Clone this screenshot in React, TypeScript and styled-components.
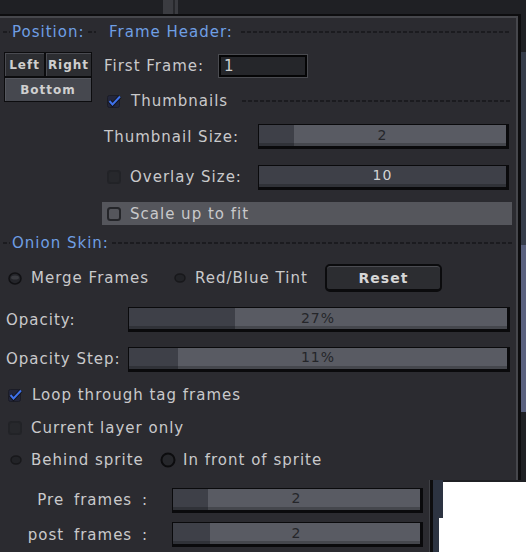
import styled, { createGlobalStyle } from "styled-components";

const GlobalStyle = createGlobalStyle`
  html, body {
    margin: 0;
    padding: 0;
    background: #1f2024;
  }
  body {
    width: 526px;
    height: 552px;
    overflow: hidden;
    font-family: "DejaVu Sans", "Liberation Sans", sans-serif;
  }
`;

const Screen = styled.div`
  width: 526px;
  height: 552px;
  display: flex;
  flex-direction: column;
  background: #1f2024;
  overflow: hidden;
`;

const TopBar = styled.div`
  height: 14px;
  flex: none;
  padding-left: 163px;
`;

const Handle = styled.div`
  width: 15px;
  height: 14px;
  background: linear-gradient(
    to right,
    #3b3c41 0 10px,
    #27282c 10px 12px,
    #3b3c41 12px
  );
`;

const Upper = styled.div`
  display: flex;
  height: 466px;
  flex: none;
`;

const Popup = styled.div`
  width: 521px;
  box-sizing: border-box;
  border-top: 2px solid #0d0d0f;
  border-right: 3px solid #0d0d0f;
  background: #2b2b30;
`;

const PopupInner = styled.div`
  height: 100%;
  box-sizing: border-box;
  border-top: 2px solid #46474c;
  border-right: 2px solid #46474c;
  padding-right: 4px;
  display: flex;
  flex-direction: column;
`;

const ScrollStrip = styled.div`
  width: 5px;
  display: flex;
  flex-direction: column;
`;

const ScrollPart = styled.div<{ $h: number; $c: string }>`
  height: ${(p) => p.$h}px;
  background: ${(p) => p.$c};
`;

const TopGrid = styled.div`
  display: grid;
  grid-template-columns: 102px 1fr;
`;

const Column = styled.div<{ $pl?: number; $pr?: number }>`
  display: flex;
  flex-direction: column;
  padding-left: ${(p) => p.$pl ?? 0}px;
  padding-right: ${(p) => p.$pr ?? 0}px;
`;

const Header = styled.div<{ $h: number; $pl: number }>`
  height: ${(p) => p.$h}px;
  padding-left: ${(p) => p.$pl}px;
  display: flex;
  align-items: center;
  gap: 2px;
`;

const HeaderText = styled.span`
  color: #6f9fe4;
  font-size: 15px;
  letter-spacing: 1px;
  white-space: nowrap;
`;

const Dash = styled.div<{ $w?: number; $ml?: number }>`
  height: 2px;
  ${(p) => (p.$w ? `width: ${p.$w}px; flex: none;` : "flex: 1;")}
  margin-left: ${(p) => p.$ml ?? 0}px;
  background-image: repeating-linear-gradient(
    to right,
    #1b1b1f 0 4px,
    transparent 4px 6px
  );
`;

const PosGrid = styled.div`
  margin: 6px 0 0 4px;
  width: 88px;
  display: grid;
  grid-template-columns: 41px 47px;
  grid-template-rows: 25px 25px;
`;

const PosButton = styled.div<{ $active?: boolean; $span?: boolean }>`
  box-sizing: border-box;
  display: flex;
  align-items: center;
  justify-content: center;
  grid-column: ${(p) => (p.$span ? "1 / span 2" : "auto")};
  border: 1px solid #0c0c0e;
  background: ${(p) => (p.$active ? "#46484f" : "#2c2d31")};
  box-shadow: inset 1px 1px 0 ${(p) => (p.$active ? "#55575e" : "#4a4b51")};
  color: #cfcfcf;
  font-size: 12px;
  font-weight: bold;
  letter-spacing: 1px;
`;

const Row = styled.div<{ $h: number; $pl?: number; $pr?: number }>`
  height: ${(p) => p.$h}px;
  flex: none;
  display: flex;
  align-items: center;
  padding-left: ${(p) => p.$pl ?? 0}px;
  padding-right: ${(p) => p.$pr ?? 0}px;
`;

const Label = styled.span<{ $w?: number; $right?: boolean; $wordGap?: number }>`
  color: #c9c9cb;
  font-size: 15px;
  letter-spacing: 1px;
  word-spacing: ${(p) => p.$wordGap ?? 0}px;
  white-space: nowrap;
  ${(p) => (p.$w ? `width: ${p.$w}px; flex: none;` : "")}
  text-align: ${(p) => (p.$right ? "right" : "left")};
`;

const LabelCell = styled.div<{ $w: number; $pl?: number }>`
  width: ${(p) => p.$w}px;
  flex: none;
  box-sizing: border-box;
  padding-left: ${(p) => p.$pl ?? 0}px;
  display: flex;
  align-items: center;
  gap: 9px;
`;

const Option = styled.div<{ $gap?: number }>`
  display: flex;
  align-items: center;
  gap: ${(p) => p.$gap ?? 9}px;
`;

const TextInput = styled.div`
  width: 90px;
  height: 24px;
  box-sizing: border-box;
  border: 1px solid #4a4b50;
  display: flex;
`;

const TextInputInner = styled.div`
  flex: 1;
  border: 2px solid #050506;
  background: #25262a;
  color: #d0d0d0;
  font-size: 15px;
  line-height: 18px;
  padding-left: 3px;
`;

const SliderBox = styled.div<{ $fill: number; $w?: number }>`
  ${(p) => (p.$w ? `width: ${p.$w}px; flex: none;` : "flex: 1;")}
  height: 25px;
  box-sizing: border-box;
  border: 1px solid #0a0a0c;
  border-right-width: 3px;
  border-bottom-width: 3px;
  background: linear-gradient(
    to right,
    #3e4048 0 ${(p) => p.$fill}%,
    #595b63 ${(p) => p.$fill}%
  );
  box-shadow: inset 0 -3px 0 rgba(0, 0, 0, 0.22);
  display: flex;
  align-items: center;
  justify-content: center;
  padding-bottom: 2px;
`;

const SliderValue = styled.span<{ $light?: boolean }>`
  color: ${(p) => (p.$light ? "#d4d4d4" : "#25262a")};
  font-size: 14px;
  letter-spacing: 1px;
`;

const Highlight = styled.div`
  margin: 5px 0 5px 102px;
  height: 23px;
  flex: none;
  background: #55565c;
  display: flex;
  align-items: center;
  padding-left: 5px;
  gap: 9px;
`;

const OptionGrid = styled.div`
  display: grid;
  grid-template-columns: 166px 151px 117px;
  align-items: center;
`;

const ResetButton = styled.div`
  height: 28px;
  box-sizing: border-box;
  border: 2px solid #0b0b0d;
  border-bottom-width: 3px;
  border-radius: 5px;
  background: #2c2d31;
  box-shadow: inset 0 1px 0 #4b4c52;
  display: flex;
  align-items: center;
  justify-content: center;
  color: #d6d6d6;
  font-size: 14px;
  font-weight: bold;
  letter-spacing: 1px;
`;

const Spacer = styled.div<{ $w: number }>`
  width: ${(p) => p.$w}px;
  flex: none;
`;

const Lower = styled.div`
  display: flex;
  height: 72px;
  flex: none;
`;

const LowerPanel = styled.div`
  width: 429px;
  flex: none;
  background: #2b2b30;
  display: flex;
  flex-direction: column;
`;

const Divider = styled.div`
  width: 4px;
  flex: none;
  box-sizing: border-box;
  border-left: 1px solid #3f4045;
  background: #0d0d0f;
`;

const SlateCol = styled.div`
  width: 10px;
  flex: none;
  display: flex;
  flex-direction: column;
  background: linear-gradient(#1f2024 0 2px, #ffffff 2px);
`;

const SlatePart = styled.div<{ $h?: number; $w: number }>`
  ${(p) => (p.$h ? `height: ${p.$h}px;` : "flex: 1;")}
  width: ${(p) => p.$w}px;
  background: #2c3341;
`;

const WhiteArea = styled.div`
  flex: 1;
  margin-top: 2px;
  background: #ffffff;
`;

type BoxKind = "checked" | "dark" | "outline";

function CheckBox({ kind }: { kind: BoxKind }) {
  if (kind === "checked") {
    return (
      <svg width="15" height="14" viewBox="0 0 15 14" style={{ flex: "none" }}>
        <rect x="0.5" y="1.5" width="12" height="12" rx="2" fill="#23263a" stroke="#1b1c26" />
        <path d="M2.5 7 L5.5 10.5 L13 2.5" stroke="#12141c" strokeWidth="4" fill="none" />
        <path d="M2.5 7 L5.5 10.5 L13 2.5" stroke="#3f71ea" strokeWidth="2" fill="none" />
      </svg>
    );
  }
  if (kind === "outline") {
    return (
      <svg width="14" height="14" viewBox="0 0 14 14" style={{ flex: "none" }}>
        <rect x="1" y="1" width="12" height="12" rx="2.5" fill="#55565c" stroke="#242529" strokeWidth="2" />
      </svg>
    );
  }
  return (
    <svg width="14" height="14" viewBox="0 0 14 14" style={{ flex: "none" }}>
      <rect x="1" y="1" width="12" height="12" rx="2.5" fill="#27282c" stroke="#222327" strokeWidth="2" />
    </svg>
  );
}

type RadioKind = "big" | "small" | "ring";

function Radio({ kind }: { kind: RadioKind }) {
  if (kind === "ring") {
    return (
      <svg width="16" height="16" viewBox="0 0 16 16" style={{ flex: "none" }}>
        <circle cx="8" cy="8" r="6.5" fill="#26272b" stroke="#0c0c0e" strokeWidth="2" />
      </svg>
    );
  }
  if (kind === "small") {
    return (
      <svg width="12" height="10" viewBox="0 0 12 10" style={{ flex: "none" }}>
        <ellipse cx="6" cy="5" rx="5" ry="4" fill="#222327" stroke="#18181b" strokeWidth="1.5" />
      </svg>
    );
  }
  return (
    <svg width="14" height="13" viewBox="0 0 14 13" style={{ flex: "none" }}>
      <ellipse cx="7" cy="6.5" rx="6" ry="5.5" fill="#24252a" stroke="#111114" strokeWidth="1.5" />
      <ellipse cx="7" cy="5.5" rx="4" ry="2" fill="#3a3b40" />
    </svg>
  );
}

function Slider({ fill, value, light, w }: { fill: number; value: string; light?: boolean; w?: number }) {
  return (
    <SliderBox $fill={fill} $w={w}>
      <SliderValue $light={light}>{value}</SliderValue>
    </SliderBox>
  );
}

export default function App() {
  return (
    <>
      <GlobalStyle />
      <Screen>
        <TopBar>
          <Handle />
        </TopBar>
        <Upper>
          <Popup>
            <PopupInner>
              <TopGrid>
                <Column $pr={6}>
                  <Header $h={28} $pl={3}>
                    <Dash $w={7} />
                    <HeaderText>Position:</HeaderText>
                    <Dash $ml={2} />
                  </Header>
                  <PosGrid>
                    <PosButton>Left</PosButton>
                    <PosButton>Right</PosButton>
                    <PosButton $active $span>
                      Bottom
                    </PosButton>
                  </PosGrid>
                </Column>
                <Column $pr={1}>
                  <Header $h={28} $pl={7}>
                    <HeaderText>Frame Header:</HeaderText>
                    <Dash $ml={6} />
                  </Header>
                  <Row $h={40} $pl={2}>
                    <Label $w={114}>First Frame:</Label>
                    <TextInput>
                      <TextInputInner>1</TextInputInner>
                    </TextInput>
                  </Row>
                  <Row $h={30} $pl={5}>
                    <Option>
                      <CheckBox kind="checked" />
                      <Label>Thumbnails</Label>
                    </Option>
                    <Dash $ml={14} />
                  </Row>
                  <Row $h={41} $pl={2} $pr={2}>
                    <LabelCell $w={154}>
                      <Label>Thumbnail Size:</Label>
                    </LabelCell>
                    <Slider fill={14} value="2" />
                  </Row>
                  <Row $h={40} $pl={2} $pr={2}>
                    <LabelCell $w={154} $pl={3}>
                      <CheckBox kind="dark" />
                      <Label>Overlay Size:</Label>
                    </LabelCell>
                    <Slider fill={100} value="10" light />
                  </Row>
                </Column>
              </TopGrid>
              <Highlight>
                <CheckBox kind="outline" />
                <Label>Scale up to fit</Label>
              </Highlight>
              <Header $h={26} $pl={3}>
                <Dash $w={7} />
                <HeaderText>Onion Skin:</HeaderText>
                <Dash $ml={1} />
              </Header>
              <Row $h={44} $pl={8}>
                <OptionGrid>
                  <Option>
                    <Radio kind="big" />
                    <Label>Merge Frames</Label>
                  </Option>
                  <Option $gap={9}>
                    <Radio kind="small" />
                    <Label>Red/Blue Tint</Label>
                  </Option>
                  <ResetButton>Reset</ResetButton>
                </OptionGrid>
              </Row>
              <Row $h={39} $pl={6} $pr={2}>
                <Label $w={122}>Opacity:</Label>
                <Slider fill={28} value="27%" />
              </Row>
              <Row $h={40} $pl={6} $pr={2}>
                <Label $w={122}>Opacity Step:</Label>
                <Slider fill={13} value="11%" />
              </Row>
              <Row $h={32} $pl={8}>
                <Option>
                  <CheckBox kind="checked" />
                  <Label>Loop through tag frames</Label>
                </Option>
              </Row>
              <Row $h={34} $pl={8}>
                <Option>
                  <CheckBox kind="dark" />
                  <Label>Current layer only</Label>
                </Option>
              </Row>
              <Row $h={30} $pl={10}>
                <LabelCell $w={150}>
                  <Radio kind="small" />
                  <Label>Behind sprite</Label>
                </LabelCell>
                <Option $gap={7}>
                  <Radio kind="ring" />
                  <Label>In front of sprite</Label>
                </Option>
              </Row>
            </PopupInner>
          </Popup>
          <ScrollStrip>
            <ScrollPart $h={38} $c="#1f2024" />
            <ScrollPart $h={193} $c="#363c4a" />
            <ScrollPart $h={167} $c="#59607e" />
          </ScrollStrip>
        </Upper>
        <Lower>
          <LowerPanel>
            <Row $h={40}>
              <Label $w={148} $right $wordGap={4}>
                Pre frames :
              </Label>
              <Spacer $w={24} />
              <Slider fill={14} value="2" w={251} />
            </Row>
            <Row $h={29}>
              <Label $w={148} $right $wordGap={4}>
                post frames :
              </Label>
              <Spacer $w={24} />
              <Slider fill={15} value="2" w={251} />
            </Row>
          </LowerPanel>
          <Divider />
          <SlateCol>
            <SlatePart $h={38} $w={10} />
            <SlatePart $w={6} />
          </SlateCol>
          <WhiteArea />
        </Lower>
      </Screen>
    </>
  );
}
